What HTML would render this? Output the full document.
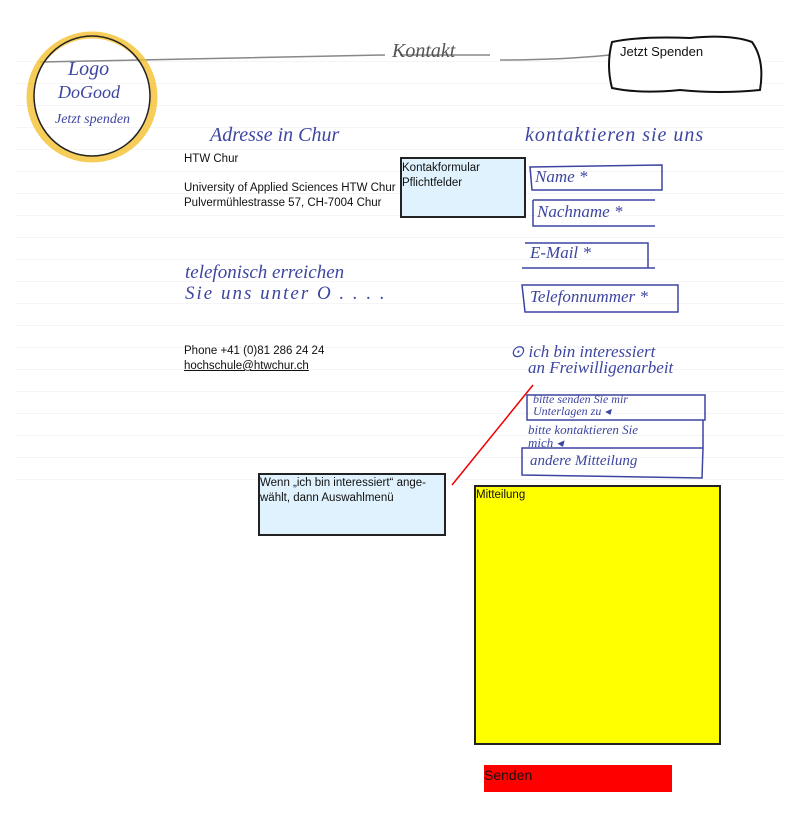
<!DOCTYPE html>
<html><head><meta charset="utf-8">
<style>
html,body{margin:0;padding:0;background:#fff;}
body{width:800px;height:819px;position:relative;overflow:hidden;font-family:"Liberation Sans",sans-serif;}
.a{position:absolute;}
.h{position:absolute;font-family:"Liberation Serif",serif;font-style:italic;color:#3d45a0;white-space:nowrap;}
.t{position:absolute;font-size:11.5px;color:#111;line-height:15px;white-space:nowrap;}
.box{position:absolute;border:2px solid #222;box-sizing:border-box;font-size:11.5px;line-height:15px;color:#111;}
</style></head><body>
<div class="a" style="left:15px;top:40px;width:770px;height:448px;background:repeating-linear-gradient(#fff 0,#fff 21px,#f5f5f5 21px,#f5f5f5 22px);"></div>
<svg class="a" style="left:0;top:0" width="800" height="819">
<path d="M40 62 Q200 58 385 55 M400 55 L490 55 M500 60 Q560 60 610 55" stroke="#888" stroke-width="1.5" fill="none"/>
<ellipse cx="92" cy="97" rx="62" ry="62" stroke="#f4c030" stroke-width="7" fill="none" opacity=".8"/>
<ellipse cx="92" cy="96" rx="58" ry="60" stroke="#222" stroke-width="1.5" fill="none"/>
<path d="M612 42 Q640 36 690 38 Q730 34 752 42 Q765 60 760 90 Q720 94 680 90 Q640 94 612 88 Q606 65 612 42Z" stroke="#111" stroke-width="2" fill="#fff"/>
<g stroke="#3d45a0" stroke-width="1.5" fill="none">
<path d="M530 167 L662 165 L662 190 L532 190 Z"/>
<path d="M533 200 L655 200 M533 200 L533 226 L655 226"/>
<path d="M525 243 L648 243 L648 268 M522 268 L655 268"/>
<path d="M522 285 L678 285 L678 312 L525 312 Z"/>
<path d="M527 395 L705 395 L705 420 L527 420 Z M527 420 L703 420 L703 448 M522 448 L703 448 L702 478 L522 475 Z"/>
</g>
<line x1="452" y1="485" x2="533" y2="385" stroke="#e00" stroke-width="1.5"/>
</svg>
<div class="h" style="left:68px;top:58px;font-size:20px;">Logo</div>
<div class="h" style="left:58px;top:82px;font-size:18px;">DoGood</div>
<div class="h" style="left:55px;top:112px;font-size:14px;">Jetzt spenden</div>
<div class="h" style="left:392px;top:40px;font-size:20px;color:#555;">Kontakt</div>
<div class="t" style="left:620px;top:44px;font-size:13px;">Jetzt Spenden</div>
<div class="h" style="left:210px;top:124px;font-size:20px;">Adresse in Chur</div>
<div class="h" style="left:525px;top:124px;font-size:20px;letter-spacing:1px;">kontaktieren sie uns</div>
<div class="t" style="left:184px;top:152px;">HTW Chur</div>
<div class="t" style="left:184px;top:181px;">University of Applied Sciences HTW Chur<br>Pulvermühlestrasse 57, CH-7004 Chur</div>
<div class="box" style="left:400px;top:157px;width:126px;height:61px;background:#dff2fd;padding:2px 0 0 0;">Kontakformular<br>Pflichtfelder</div>
<div class="h" style="left:535px;top:167px;font-size:17px;">Name *</div>
<div class="h" style="left:537px;top:202px;font-size:17px;">Nachname *</div>
<div class="h" style="left:530px;top:243px;font-size:17px;">E-Mail *</div>
<div class="h" style="left:530px;top:287px;font-size:17px;">Telefonnummer *</div>
<div class="h" style="left:185px;top:262px;font-size:19px;">telefonisch erreichen</div>
<div class="h" style="left:185px;top:283px;font-size:19px;letter-spacing:2px;">Sie uns unter  O . . . .</div>
<div class="t" style="left:184px;top:344px;">Phone +41 (0)81 286 24 24<br><u>hochschule@htwchur.ch</u></div>
<div class="h" style="left:510px;top:342px;font-size:17px;">⊙ ich bin interessiert</div>
<div class="h" style="left:528px;top:358px;font-size:17px;">an Freiwilligenarbeit</div>
<div class="h" style="left:533px;top:393px;font-size:12px;line-height:12px;">bitte senden Sie mir<br>Unterlagen zu ◂</div>
<div class="h" style="left:528px;top:423px;font-size:13px;line-height:13px;">bitte kontaktieren Sie<br>mich ◂</div>
<div class="h" style="left:530px;top:453px;font-size:15px;">andere Mitteilung</div>
<div class="box" style="left:258px;top:473px;width:188px;height:63px;background:#dff2fd;padding:1px 0 0 0;">Wenn „ich bin interessiert“ ange-<br>wählt, dann Auswahlmenü</div>
<div class="box" style="left:474px;top:485px;width:247px;height:260px;background:#ffff00;padding:1px 0 0 0;">Mitteilung</div>
<div class="a" style="left:484px;top:765px;width:188px;height:27px;background:#ff0000;font-size:14px;color:#111;line-height:20px;">Senden</div>
</body></html>
